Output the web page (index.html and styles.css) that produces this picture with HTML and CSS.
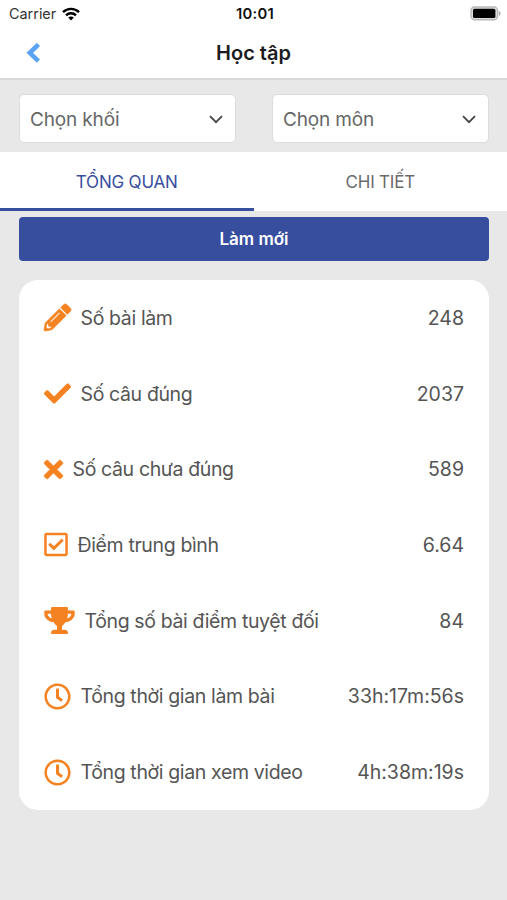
FILE: index.html
```html
<!DOCTYPE html>
<html lang="vi">
<head>
<meta charset="utf-8">
<title>Học tập</title>
<link rel="stylesheet" href="styles.css">
</head>
<body>
<div class="status">
  <div class="carrier"><span>Carrier</span>
    <svg width="18" height="14" viewBox="0 0 18 14"><g fill="none" stroke="#000" stroke-width="2.4"><path d="M1 5.2C5.4.7 12.6.7 17 5.2"/><path d="M4 8.4c2.8-2.8 7.2-2.8 10 0"/></g><path d="M6.2 10.6c1.6-1.5 4-1.5 5.6 0L9 13.5z"/></svg>
  </div>
  <time class="clock">10:01</time>
  <svg class="battery" width="31" height="15" viewBox="0 0 31 15"><rect x="1" y="1" width="26.6" height="12.8" rx="3.8" fill="#ddd" stroke="#b8b8b8" stroke-width="1.4"/><rect x="3" y="2.8" width="22.4" height="9.2" rx="1.6"/><path d="M28.9 5c2.2.8 2.2 4.2 0 5z" fill="#aaa"/></svg>
</div>
<header class="nav">
  <svg class="back" width="14" height="20" viewBox="0 0 14 20"><path d="M10.8 3 3.8 9.8 10.8 16.6" fill="none" stroke="#5ba3f5" stroke-width="4.6" stroke-linecap="square"/></svg>
  <h1 class="title">Học tập</h1>
</header>
<div class="filters">
  <div class="select"><span>Chọn khối</span><svg width="14" height="9" viewBox="0 0 14 9"><path d="m1 1.2 6 6 6-6"/></svg></div>
  <div class="select"><span>Chọn môn</span><svg width="14" height="9" viewBox="0 0 14 9"><path d="m1 1.2 6 6 6-6"/></svg></div>
</div>
<nav class="tabs">
  <div class="tab active"><span>TỔNG QUAN</span></div>
  <div class="tab"><span>CHI TIẾT</span></div>
</nav>
<main class="content">
  <button class="refresh">Làm mới</button>
  <section class="card">
    <div class="row"><svg class="icon bold" width="27" viewBox="0 0 512 512"><path d="M497.9 142.1l-46.1 46.1c-4.7 4.7-12.3 4.7-17 0l-111-111c-4.7-4.7-4.7-12.3 0-17l46.1-46.1c18.7-18.7 49.1-18.7 67.9 0l60.1 60.1c18.8 18.7 18.8 49.1 0 67.9zM284.2 99.8L21.6 362.4.4 483.9c-2.9 16.4 11.4 30.6 27.8 27.8l121.5-21.3 262.6-262.6c4.7-4.7 4.7-12.3 0-17l-111-111c-4.8-4.7-12.4-4.7-17.1 0zM124.1 339.9c-5.5-5.5-5.5-14.3 0-19.8l154-154c5.5-5.5 14.3-5.5 19.8 0s5.5 14.3 0 19.8l-154 154c-5.5 5.5-14.3 5.5-19.8 0zM88 424h48v36.3l-64.5 11.3-31.1-31.1L51.7 376H88v48z"/></svg><span class="label">Số bài làm</span><span class="value">248</span></div>
    <div class="row"><svg class="icon" width="27" viewBox="0 0 512 512"><path d="M173.898 439.404l-166.4-166.4c-9.997-9.997-9.997-26.206 0-36.204l36.203-36.204c9.997-9.998 26.207-9.998 36.204 0L192 312.69 432.095 72.596c9.997-9.997 26.207-9.997 36.204 0l36.203 36.204c9.997 9.997 9.997 26.206 0 36.204l-294.4 294.401c-9.998 9.997-26.207 9.997-36.204-.001z"/></svg><span class="label">Số câu đúng</span><span class="value">2037</span></div>
    <div class="row"><svg class="icon bold" width="19" viewBox="0 0 352 512"><path d="M242.72 256l100.07-100.07c12.28-12.28 12.28-32.19 0-44.48l-22.24-22.24c-12.28-12.28-32.19-12.28-44.48 0L176 189.28 75.93 89.21c-12.28-12.28-32.19-12.28-44.48 0L9.21 111.45c-12.28 12.28-12.28 32.19 0 44.48L109.28 256 9.21 356.07c-12.28 12.28-12.28 32.19 0 44.48l22.24 22.24c12.28 12.28 32.2 12.28 44.48 0L176 322.72l100.07 100.07c12.28 12.28 32.2 12.28 44.48 0l22.24-22.24c12.28-12.28 12.28-32.19 0-44.48L242.72 256z"/></svg><span class="label">Số câu chưa đúng</span><span class="value">589</span></div>
    <div class="row"><svg class="icon" width="24" viewBox="0 0 448 512"><path d="M400 32H48C21.49 32 0 53.49 0 80v352c0 26.51 21.49 48 48 48h352c26.51 0 48-21.49 48-48V80c0-26.51-21.49-48-48-48zm0 400H48V80h352v352zm-35.864-241.724L191.547 361.48c-4.705 4.667-12.303 4.637-16.97-.068l-90.781-91.516c-4.667-4.705-4.637-12.303.069-16.971l22.719-22.536c4.705-4.667 12.303-4.637 16.97.069l59.792 60.277 141.352-140.216c4.705-4.667 12.303-4.637 16.97.068l22.536 22.718c4.667 4.706 4.637 12.304-.068 16.971z"/></svg><span class="label">Điểm trung bình</span><span class="value">6.64</span></div>
    <div class="row"><svg class="icon" width="31" viewBox="0 0 576 512"><path d="M552 64H448V24c0-13.3-10.7-24-24-24H152c-13.3 0-24 10.7-24 24v40H24C10.7 64 0 74.7 0 88v56c0 35.7 22.5 72.4 61.9 100.7 31.5 22.7 69.8 37.1 110 41.7C203.3 338.5 240 360 240 360v72h-48c-35.3 0-64 20.7-64 56v12c0 6.6 5.4 12 12 12h296c6.6 0 12-5.4 12-12v-12c0-35.3-28.7-56-64-56h-48v-72s36.7-21.5 68.1-73.6c40.3-4.6 78.6-19 110-41.7 39.3-28.3 61.9-65 61.9-100.7V88c0-13.3-10.7-24-24-24zM99.3 192.8C74.9 175.2 64 155.6 64 144v-16h64.2c1 32.6 5.8 61.2 12.8 86.2-15.1-5.2-29.2-12.4-41.7-21.4zM512 144c0 16.1-17.7 36.1-35.3 48.8-12.5 9-26.7 16.2-41.8 21.4 7-25 11.8-53.6 12.8-86.2H512v16z"/></svg><span class="label">Tổng số bài điểm tuyệt đối</span><span class="value">84</span></div>
    <div class="row"><svg class="icon" width="27" viewBox="0 0 512 512"><path d="M256 8C119 8 8 119 8 256s111 248 248 248 248-111 248-248S393 8 256 8zm0 448c-110.5 0-200-89.5-200-200S145.5 56 256 56s200 89.5 200 200-89.5 200-200 200zm61.8-104.4l-84.9-61.7c-3.1-2.3-4.9-5.9-4.9-9.7V116c0-6.6 5.4-12 12-12h32c6.6 0 12 5.4 12 12v141.7l66.8 48.6c5.4 3.9 6.5 11.4 2.6 16.8L334.6 349c-3.9 5.3-11.4 6.5-16.8 2.6z"/></svg><span class="label">Tổng thời gian làm bài</span><span class="value">33h:17m:56s</span></div>
    <div class="row"><svg class="icon" width="27" viewBox="0 0 512 512"><path d="M256 8C119 8 8 119 8 256s111 248 248 248 248-111 248-248S393 8 256 8zm0 448c-110.5 0-200-89.5-200-200S145.5 56 256 56s200 89.5 200 200-89.5 200-200 200zm61.8-104.4l-84.9-61.7c-3.1-2.3-4.9-5.9-4.9-9.7V116c0-6.6 5.4-12 12-12h32c6.6 0 12 5.4 12 12v141.7l66.8 48.6c5.4 3.9 6.5 11.4 2.6 16.8L334.6 349c-3.9 5.3-11.4 6.5-16.8 2.6z"/></svg><span class="label">Tổng thời gian xem video</span><span class="value">4h:38m:19s</span></div>
  </section>
</main>
</body>
</html>
```
FILE: styles.css
```css
* { box-sizing: border-box; }
body {
  margin: 0;
  height: 900px;
  overflow: hidden;
  background: #e8e8e8;
  color: #555;
  font-family: Inter, sans-serif;
}
svg { display: block; flex: none; }
.status {
  height: 27px;
  padding: 0 6px 0 9px;
  display: grid;
  grid-template-columns: 1fr auto 1fr;
  align-items: center;
  background: #fff;
  color: #111;
}
.carrier { display: flex; align-items: center; gap: 6px; font-size: 14.4px; color: #333; }
.clock { font-size: 14.8px; font-weight: 600; letter-spacing: 0.2px; }
.battery { justify-self: end; }
.nav {
  height: 53px;
  padding: 0 26px;
  display: grid;
  grid-template-columns: 14px 1fr 14px;
  align-items: center;
  background: #fff;
  border-bottom: 2px solid #dadada;
}
.title { margin: 0; text-align: center; font-size: 20px; font-weight: 600; color: #1c1c1e; }
.filters {
  height: 72px;
  padding: 14px 18px 9px 19px;
  display: grid;
  grid-template-columns: 1fr 1fr;
  gap: 36px;
}
.select {
  display: flex;
  align-items: center;
  justify-content: space-between;
  padding: 2px 12px 0 10px;
  border: 1px solid #dcdcdc;
  border-radius: 5px;
  background: #fff;
  font-size: 19px;
  letter-spacing: -0.15px;
  color: #666;
}
.select path { fill: none; stroke: #444; stroke-width: 1.8; }
.tabs { height: 59px; display: flex; background: #fff; font-size: 17px; letter-spacing: -0.2px; color: #6b6b6b; }
.tab { flex: 1; display: flex; align-items: center; justify-content: center; padding-top: 3px; border-bottom: 3px solid transparent; }
.tab.active { color: #374e9f; border-color: #374e9f; }
.content { padding: 6px 18px 0 19px; }
.refresh {
  display: block;
  width: 100%;
  height: 44px;
  padding: 0;
  border: 0;
  border-radius: 4px;
  background: #374e9f;
  color: #fff;
  font: 600 17px Inter, sans-serif;
}
.card { margin-top: 19px; height: 530px; padding: 0 25px 0 24.5px; border-radius: 19px; background: #fff; display: grid; grid-template-rows: repeat(7, 1fr); }
.row { display: flex; align-items: center; font-size: 19.5px; }
.icon { height: 27px; margin-right: 10px; fill: #f58220; overflow: visible; }
.icon.bold { stroke: #f58220; stroke-width: 12; }
.label { letter-spacing: -0.37px; }
.value { margin-left: auto; }
```
